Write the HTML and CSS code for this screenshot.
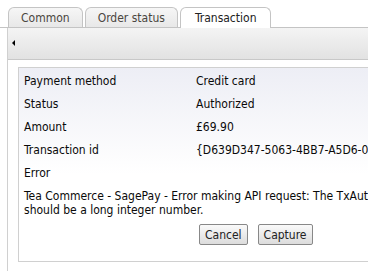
FILE: index.html
```html
<!DOCTYPE html>
<html>
<head>
    <title>Transaction</title>
    <link rel="stylesheet" href="styles.css">
</head>
<body>
    <div class="tabs">
        <div class="tab">Common</div>
        <div class="tab">Order status</div>
        <div class="tab active">Transaction</div>
    </div>
    <div class="panel">
        <div class="toolbar"><span class="arrow"></span></div>
        <div class="content">
            <div class="box">
                <div class="row"><span class="label">Payment method</span><span>Credit card</span></div>
                <div class="row"><span class="label">Status</span><span>Authorized</span></div>
                <div class="row"><span class="label">Amount</span><span>£69.90</span></div>
                <div class="row"><span class="label">Transaction id</span><span>{D639D347-5063-4BB7-A5D6-0B95A7C2E1F4}</span></div>
                <div class="row"><span class="label">Error</span></div>
                <p class="message">Tea Commerce - SagePay - Error making API request: The TxAuthNo field<br>should be a long integer number.</p>
                <div class="actions">
                    <button>Cancel</button>
                    <button>Capture</button>
                </div>
            </div>
        </div>
    </div>
</body>
</html>
```

FILE: styles.css
```css
body {
    margin: 0;
    overflow: hidden;
    background-color: white;
    font-family: "DejaVu Sans Condensed", "DejaVu Sans", sans-serif;
    font-size: 12px;
    color: #0a0a0a;
}
.tabs {
    display: flex;
    gap: 2px;
    padding: 7px 0 0 8px;
    height: 20px;
    border-bottom: 1px solid #c4c4c4;
    width: 600px;
}
.tab {
    height: 19px;
    line-height: 20px;
    padding: 0 12px;
    border: 1px solid #c4c4c4;
    border-bottom: none;
    border-radius: 6px 6px 0 0;
    background: linear-gradient(#f6f6f6, #e8e8e8);
    color: #4a4640;
}
.tab.active {
    background: #fff;
    color: #222;
    height: 20px;
    padding: 0 14px;
    margin-bottom: -1px;
}
.panel {
    margin-left: 7px;
    border-left: 1px solid #d0d0d0;
    width: 600px;
    height: 300px;
}
.toolbar {
    height: 31px;
    background: linear-gradient(#f4f4f4, #e2e2e2);
    border-bottom: 1px solid #c8c8c8;
    position: relative;
}
.arrow {
    position: absolute;
    left: 4px;
    top: 12px;
    border-top: 3px solid transparent;
    border-bottom: 3px solid transparent;
    border-right: 3px solid #000;
}
.content {
    padding: 7px 0 0 10px;
}
.box {
    width: 520px;
    height: 195px;
    border: 1px solid #d0d0d0;
    background: linear-gradient(#edeef5, #fff 55%);
    padding: 2px 0 0 5px;
    box-sizing: border-box;
}
.row {
    display: flex;
    height: 23px;
    line-height: 23px;
}
.label {
    width: 172px;
}
.message {
    margin: 4px 0 0;
    line-height: 14px;
}
.actions {
    padding: 7px 0 0 175px;
    display: flex;
    gap: 10px;
}
button {
    font-family: inherit;
    font-size: 12px;
    height: 21px;
    padding: 0 5px;
    border: 1px solid #888;
    border-radius: 2px;
    background: linear-gradient(#fafafa, #dcdcdc);
    color: #222;
}
```
